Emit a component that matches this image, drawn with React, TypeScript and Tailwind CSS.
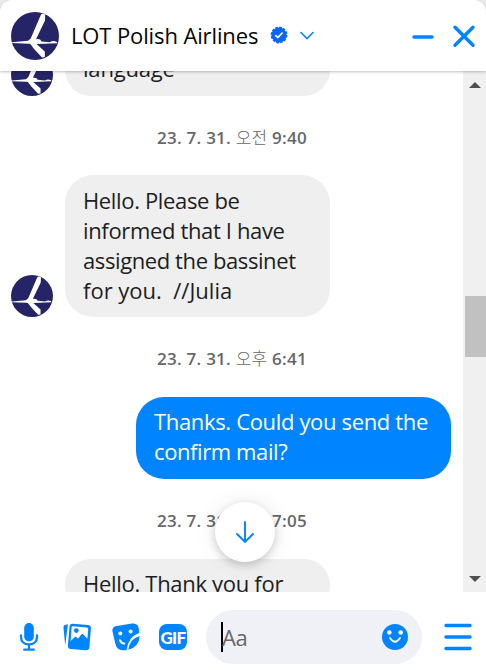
import type { ReactNode } from 'react';

function Avatar({ className }: { className: string }) {
  return (
    <svg viewBox="0 0 48 48" className={`shrink-0 ${className}`}>
      <circle cx="24" cy="24" r="24" fill="#242466" />
      <g fill="#fff">
        <path d="M30 2.500Q31.500 .9 34.200 2.600L34 8.500 25 27.200Q29.500 26.400 30.500 29.500L39 30.200Q42 28 45.800 30L46.300 31.200 26 31.900 17.500 31.700 1.200 31.100V30.200L17 28.800 19.700 26.500Z" />
        <path d="M18.500 31H24.500L33.800 39.500V45L31 45.500 23.500 37.500Z" />
      </g>
    </svg>
  );
}

function Bubble({ lines, tracking, className = '' }: { lines: string[]; tracking: string[]; className?: string }) {
  return (
    <div className={`shrink-0 rounded-[28px] pl-[18px] text-[22px] leading-[30px] whitespace-pre ${className}`}>
      {lines.map((line, i) => (
        <div key={line} className={tracking[i]}>{line}</div>
      ))}
    </div>
  );
}

function Stamp({ children }: { children: ReactNode }) {
  return (
    <div className="flex h-20 shrink-0 items-center justify-center pl-[2px] pt-[3px] text-[17px] font-semibold tracking-[0.25px] text-[#65676b] whitespace-pre">
      {children}
    </div>
  );
}

function Header() {
  return (
    <header className="relative z-10 flex h-[71px] shrink-0 items-center rounded-t-[12px] bg-white pl-[11px] pr-[10px] shadow-[0_1px_3px_rgba(0,0,0,0.25)]">
      <Avatar className="size-12" />
      <h1 className="-mt-[2px] ml-3 w-[189px] text-[22px] font-medium leading-[30px] tracking-[-0.12px] whitespace-nowrap text-[#050505]">LOT Polish Airlines</h1>
      <svg viewBox="0 0 18 18" className="-mt-px ml-[10px] size-[18px]">
        <circle cx="9" cy="9" r="7.600" fill="#0866ff" stroke="#0866ff" strokeWidth="1.600" strokeDasharray="2.600 1.380" />
        <path d="M5.300 9.200 7.800 11.600 12.600 6.500" fill="none" stroke="#fff" strokeWidth="1.700" />
      </svg>
      <svg viewBox="0 0 16 10" className="-ml-px h-[10px] w-4 translate-x-3" fill="none" stroke="#0084ff" strokeWidth="1.600" strokeLinecap="round">
        <path d="m2 1.500 6 6 6-6" />
      </svg>
      <svg viewBox="0 0 66 24" className="ml-auto h-6 w-[66px]" fill="none" stroke="#0084ff" strokeWidth="3.400" strokeLinecap="round">
        <path d="M4 13H22M45 3.200l18 18M63 3.200 45 21.200" />
      </svg>
    </header>
  );
}

function Toolbar() {
  return (
    <footer className="flex h-[78px] shrink-0 items-center bg-white pl-[19px] pr-[14px] pt-[12px]">
      <svg viewBox="0 0 20 30" className="h-[30px] w-5" fill="none" stroke="#0084ff" strokeWidth="2.300" strokeLinecap="round">
        <rect x="5.200" y="1" width="9.600" height="18.500" rx="4.800" fill="#0084ff" stroke="none" />
        <path d="M2 13.500v1.400c0 4.600 3.300 7.500 8 7.500s8-2.900 8-7.500v-1.400M10 22.500v5M5.200 27.700h9.600" />
      </svg>
      <svg viewBox="0 0 28 30" className="ml-6 h-[30px] w-7">
        <path d="M4.800 2.200 2.600 2.700Q.2 3.300.5 6L2.200 23.500 4.800 3Z" fill="#0084ff" />
        <path d="m9.800 1.700 15 1.200q3.400.3 3.100 3.500L26.400 25q-.3 3.500-3.700 3.200L7.800 27Q4.600 26.800 4.900 23.500L6.500 5Q6.800 1.500 9.800 1.700Z" fill="#0084ff" />
        <path d="m9.600 4.300 14.200 1.100q1.600.1 1.400 1.800l-.8 9.500-4.200-4.400q-1-.8-1.900.2L15 16.800l-1.800-1.700q-.9-.6-1.600.2L7.700 19.100 8.600 5.400Q8.700 4.200 9.600 4.300Z" fill="#fff" />
        <circle cx="13.300" cy="8.600" r="2.400" fill="#0084ff" />
      </svg>
      <svg viewBox="0 0 28 30" className="ml-[21px] h-[30px] w-7">
        <path d="M4.500 4 20 1.500Q26.500.7 26.900 7.500L27 11Q16 15 14.600 28.200H11Q5 28.300 3.400 22L.5 9.500Q-.4 5 4.500 4Z" fill="#0084ff" />
        <path d="M27.600 14Q27.500 24.500 16.300 27.800 17.500 17 27.600 14Z" fill="#0084ff" />
        <circle cx="8.300" cy="11.500" r="2" fill="#fff" />
        <circle cx="18.600" cy="9.600" r="2" fill="#fff" />
        <path d="M8 18.200q1.400 3.500 4.200 3.300" fill="none" stroke="#fff" strokeWidth="2" strokeLinecap="round" />
      </svg>
      <div className="ml-[19px] flex h-[26px] w-7 items-center justify-center rounded-[8px] bg-[#0084ff] font-['Lato'] text-[17px] font-black leading-none tracking-[-0.7px] text-white">GIF</div>
      <div className="ml-[19px] flex h-[54px] w-[216px] items-center rounded-full bg-[#f0f1f6] pl-[15px] pr-[14px]">
        <span className="h-[30px] w-[2px] bg-black" />
        <span className="-ml-px text-[22px] tracking-[-0.5px] text-[#65676b]">Aa</span>
        <svg viewBox="0 0 26 26" className="ml-auto size-[26px]">
          <circle cx="13" cy="13" r="13" fill="#0084ff" />
          <circle cx="7.300" cy="8.500" r="2.300" fill="#fff" />
          <circle cx="18.700" cy="8.500" r="2.300" fill="#fff" />
          <path d="M8 14q5 7.500 10 0" fill="none" stroke="#fff" strokeWidth="1.800" strokeLinecap="round" />
        </svg>
      </div>
      <svg viewBox="0 0 28 28" className="ml-auto size-7" fill="none" stroke="#0084ff" strokeWidth="3.400" strokeLinecap="round">
        <path d="M2 2.500h24M2 14h24M2 25.500h24" />
      </svg>
    </footer>
  );
}

export default function App() {
  return (
    <div className="h-[670px] w-[486px] overflow-hidden bg-[#e9eaec] font-['Open_Sans','Noto_Sans_CJK_KR',sans-serif]">
      <div className="flex h-full flex-col rounded-t-[12px] bg-white">
        <Header />
        <main className="relative flex h-[521px] shrink-0 overflow-hidden">
          <div className="flex h-full w-[463px] shrink-0 flex-col pl-[11px] pr-3 text-[#1c1e21]">
            <div className="-mt-[27px] flex shrink-0 items-end gap-3">
              <Avatar className="size-[42px]" />
              <Bubble lines={['language']} tracking={['tracking-[-0.2px]']} className="w-[265px] bg-[#efefef] pb-[13px] pt-[9px]" />
            </div>
            <div className="-mb-px">
              <Stamp>23. 7. 31. <span className="font-light">오전</span> 9:40</Stamp>
            </div>
            <div className="flex shrink-0 items-end gap-3">
              <Avatar className="size-[42px]" />
              <Bubble
                lines={['Hello. Please be', 'informed that I have', 'assigned the bassinet', 'for you.  //Julia']}
                tracking={['tracking-[-0.35px]', 'tracking-[-0.35px]', 'tracking-[-0.4px]', 'tracking-[0px]']}
                className="w-[265px] bg-[#efefef] pb-[12px] pt-[10px]"
              />
            </div>
            <Stamp>23. 7. 31. <span className="font-light">오후</span> 6:41</Stamp>
            <Bubble
              lines={['Thanks. Could you send the', 'confirm mail?']}
              tracking={['tracking-[-0.34px]', 'tracking-[-0.4px]']}
              className="w-[315px] self-end bg-[#0084ff] pb-[13px] pt-[9px] text-white"
            />
            <Stamp>23. 7. 31. <span className="font-light">오후</span> 7:05</Stamp>
            <Bubble lines={['Hello. Thank you for']} tracking={['tracking-[-0.3px]']} className="ml-[54px] w-[265px] bg-[#efefef] pb-[13px] pt-[9px]" />
          </div>
          <div className="flex w-[23px] shrink-0 flex-col items-end bg-[#f0f0f0]">
            <svg viewBox="0 0 12 6" className="mr-[5px] mt-[11px] h-[6px] w-3"><path d="M6 0 12 6H0Z" fill="#505050" /></svg>
            <div className="mt-[208px] h-[61px] w-[21px] bg-[#c1c1c1]" />
            <svg viewBox="0 0 12 6" className="mb-[10px] mr-[5px] mt-auto h-[6px] w-3"><path d="M0 0H12L6 6Z" fill="#505050" /></svg>
          </div>
          <button className="absolute left-[215px] top-[431px] flex size-[60px] items-center justify-center rounded-full bg-white shadow-[0_3px_8px_rgba(0,0,0,0.18),0_0_24px_rgba(0,0,0,0.07)]">
            <svg viewBox="0 0 20 24" className="h-6 w-5" fill="none" stroke="#0084ff" strokeWidth="1.900" strokeLinecap="round">
              <path d="M10 2v20M2 14l8 8 8-8" />
            </svg>
          </button>
        </main>
        <Toolbar />
      </div>
    </div>
  );
}
